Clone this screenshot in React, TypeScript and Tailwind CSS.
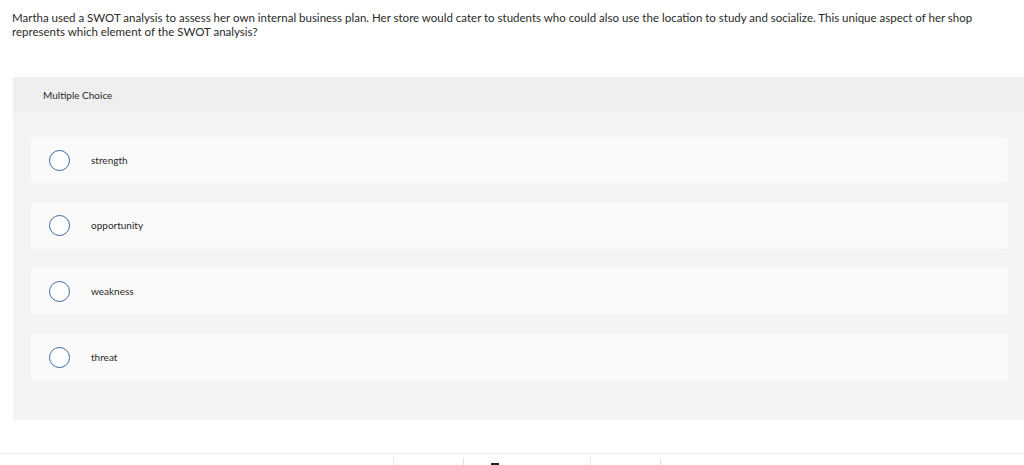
import React from "react";

const choices = ["strength", "opportunity", "weakness", "threat"];

const App: React.FC = () => {
  return (
    <div className="min-h-[465px] overflow-hidden bg-white font-['Lato','Liberation_Sans',sans-serif] text-[#2a2a2a]">
      <p className="w-[990px] pl-[12px] pt-[11px] text-[11.5px] leading-[14px]">
        Martha used a SWOT analysis to assess her own internal business plan. Her store would cater to students who could
        also use the location to study and socialize. This unique aspect of her shop represents which element of the SWOT
        analysis?
      </p>

      <section className="ml-[13px] mt-[38px] h-[343px] bg-[#f4f4f4]">
        <div className="flex h-[36px] items-center bg-[#efefef] pl-[30px] text-[10px]">Multiple Choice</div>
        <div className="flex flex-col gap-[19.7px] pb-[40px] pl-[18px] pr-[16px] pt-[24px]">
          {choices.map((c) => (
            <label key={c} className="flex h-[46px] items-center rounded-[3px] bg-[#fafafa]">
              <span className="ml-[18px] h-[21px] w-[21px] rounded-full border-[1.5px] border-[#3b67a0] bg-white" />
              <span className="ml-[21px] text-[10px]">{c}</span>
            </label>
          ))}
        </div>
      </section>

      <div className="mt-[33px] flex h-[13px] items-end border-t border-[#ececec]">
        <div className="w-[393px]" />
        <div className="h-[8px] w-[70px] border-l border-[#e2e2e2]" />
        <div className="flex h-[8px] w-[127px] items-end border-l border-[#e2e2e2] pl-[27px]">
          <span className="h-[3px] w-[8px] bg-[#222]" />
        </div>
        <div className="h-[8px] w-[70px] border-l border-[#e2e2e2]" />
        <div className="h-[8px] border-l border-[#e2e2e2]" />
      </div>
    </div>
  );
};

export default App;
